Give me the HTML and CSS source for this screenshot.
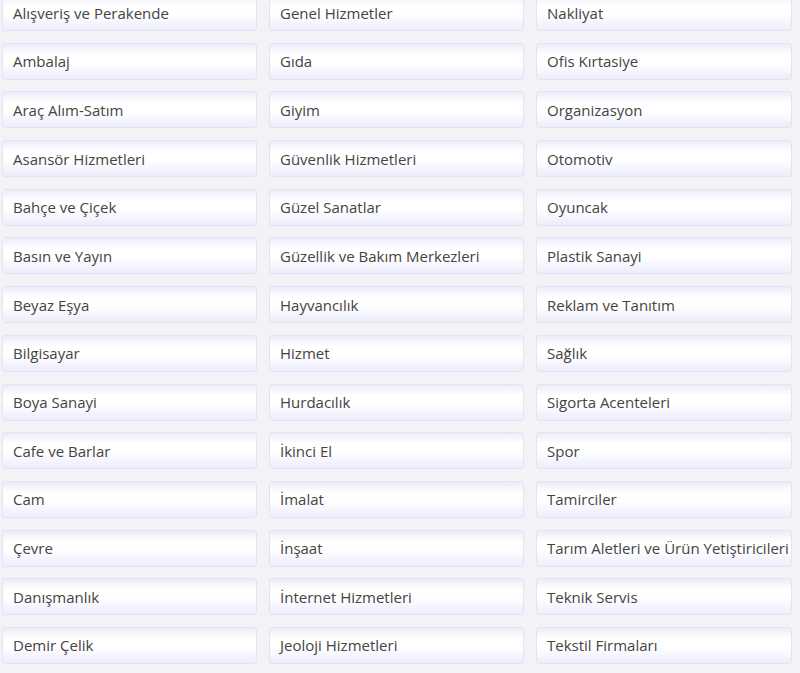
FILE: index.html
```html
<!DOCTYPE html>
<html lang="tr">
<head>
<meta charset="utf-8">
<link rel="stylesheet" href="styles.css">
</head>
<body>
<ul class="cats">
<li class="cat">Alışveriş ve Perakende</li>
<li class="cat">Ambalaj</li>
<li class="cat">Araç Alım-Satım</li>
<li class="cat">Asansör Hizmetleri</li>
<li class="cat">Bahçe ve Çiçek</li>
<li class="cat">Basın ve Yayın</li>
<li class="cat">Beyaz Eşya</li>
<li class="cat">Bilgisayar</li>
<li class="cat">Boya Sanayi</li>
<li class="cat">Cafe ve Barlar</li>
<li class="cat">Cam</li>
<li class="cat">Çevre</li>
<li class="cat">Danışmanlık</li>
<li class="cat">Demir Çelik</li>
<li class="cat">Genel Hizmetler</li>
<li class="cat">Gıda</li>
<li class="cat">Giyim</li>
<li class="cat">Güvenlik Hizmetleri</li>
<li class="cat">Güzel Sanatlar</li>
<li class="cat">Güzellik ve Bakım Merkezleri</li>
<li class="cat">Hayvancılık</li>
<li class="cat">Hizmet</li>
<li class="cat">Hurdacılık</li>
<li class="cat">İkinci El</li>
<li class="cat">İmalat</li>
<li class="cat">İnşaat</li>
<li class="cat">İnternet Hizmetleri</li>
<li class="cat">Jeoloji Hizmetleri</li>
<li class="cat">Nakliyat</li>
<li class="cat">Ofis Kırtasiye</li>
<li class="cat">Organizasyon</li>
<li class="cat">Otomotiv</li>
<li class="cat">Oyuncak</li>
<li class="cat">Plastik Sanayi</li>
<li class="cat">Reklam ve Tanıtım</li>
<li class="cat">Sağlık</li>
<li class="cat">Sigorta Acenteleri</li>
<li class="cat">Spor</li>
<li class="cat">Tamirciler</li>
<li class="cat">Tarım Aletleri ve Ürün Yetiştiricileri</li>
<li class="cat">Teknik Servis</li>
<li class="cat">Tekstil Firmaları</li>
</ul>
</body>
</html>
```
FILE: styles.css
```css
html, body {
  margin: 0;
  padding: 0;
  background: #f3f3f7;
  overflow: hidden;
}
.cats {
  list-style: none;
  margin: -6px 0 0 0;
  padding: 0 0 0 2px;
  display: grid;
  grid-auto-flow: column;
  grid-template-rows: repeat(14, 37px);
  grid-template-columns: 255px 255px 256px;
  column-gap: 12px;
  row-gap: 11.7px;
  font-family: "Open Sans", "Noto Sans", sans-serif;
  font-size: 15px;
  color: #444;
}
.cat {
  box-sizing: border-box;
  display: flex;
  align-items: center;
  padding: 0 0 0 10px;
  white-space: nowrap;
  overflow: hidden;
  border: 1px solid #e4e4f0;
  border-radius: 3px;
  background: linear-gradient(to bottom, #ececfb 0%, #ffffff 30%, #ffffff 55%, #ececfc 100%);
}
```
